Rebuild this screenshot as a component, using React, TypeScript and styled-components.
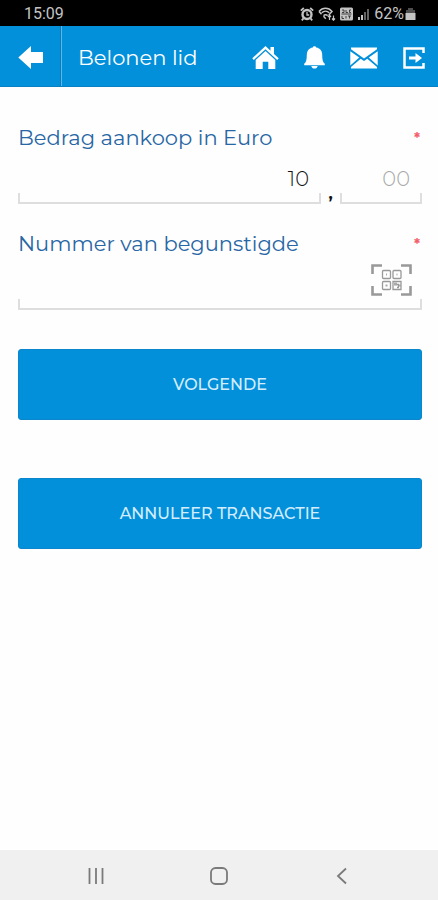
import React, { useState } from "react";
import styled, { createGlobalStyle } from "styled-components";

const GlobalStyle = createGlobalStyle`
  *, *::before, *::after { box-sizing: border-box; }
  body { margin: 0; background: #fefefe; font-family: Montserrat, Inter, sans-serif; }
  button, input { font: inherit; }
  svg { display: block; flex: none; }
`;

const Screen = styled.div`
  display: flex;
  flex-direction: column;
  min-height: 100vh;
`;

const StatusBar = styled.div`
  display: flex;
  align-items: center;
  justify-content: space-between;
  height: 26px;
  padding: 2px 22px 0 24px;
  background: #000;
  color: #c4c4c4;
  font: 400 16px/20px Roboto, sans-serif;
`;

const StatusIcons = styled.div`
  display: flex;
  align-items: center;
  gap: 4px;
`;

const Charge = styled.span`
  display: flex;
  align-items: center;
  gap: 1px;
`;

const Header = styled.header`
  display: flex;
  align-items: stretch;
  height: 61px;
  background: #0390db;
  border-bottom: 1px solid #0a80c2;
  color: #fff;
`;

const IconButton = styled.button`
  display: flex;
  align-items: center;
  justify-content: center;
  padding: 0;
  border: 0;
  background: none;
  color: inherit;
  cursor: pointer;
`;

const BackButton = styled(IconButton)`
  width: 62px;
  padding-top: 3px;
  border-right: 1px solid #5cb8ec;
  box-shadow: inset -1px 0 0 #0a7dbd;
`;

const Title = styled.h1`
  flex: 1;
  align-self: center;
  margin: 0;
  padding: 4px 0 0 16px;
  font-size: 21px;
  line-height: 28px;
  font-weight: 400;
  white-space: nowrap;
`;

const Actions = styled.nav`
  display: flex;
  align-items: center;
  gap: 25px;
  padding: 3px 13px 0 0;
`;

const Form = styled.form`
  display: flex;
  flex-direction: column;
  flex: 1;
  padding: 37px 16px 24px 18px;
`;

const Field = styled.div`
  display: flex;
  flex-direction: column;
  height: 106px;
`;

const Label = styled.label`
  display: flex;
  align-items: center;
  justify-content: space-between;
  color: #2866a5;
  font-size: 21px;
  line-height: 28px;
  font-weight: 400;
`;

const Required = styled.span`
  color: #f4606a;
  font-size: 14px;
  font-weight: 700;
  line-height: 20px;
  padding-right: 2px;
`;

const InputRow = styled.div`
  display: flex;
  align-items: flex-end;
`;

const InputBox = styled.div<{ $width?: number }>`
  display: flex;
  align-items: flex-start;
  flex: ${(p) => (p.$width ? `0 0 ${p.$width}px` : "1")};
  min-width: 0;
  height: 52px;
  padding: 6px 10px 0 2px;
  background:
    linear-gradient(#dedede, #dedede) left bottom / 2px 11px no-repeat,
    linear-gradient(#dedede, #dedede) right bottom / 2px 11px no-repeat,
    linear-gradient(#dedede, #dedede) left bottom / 100% 2px no-repeat;
`;

const TextInput = styled.input`
  flex: 1;
  width: 100%;
  height: 40px;
  min-width: 0;
  padding: 0 2px 0 0;
  border: 0;
  outline: 0;
  background: none;
  color: #111;
  font-size: 21px;
  line-height: 28px;
  font-weight: 300;
  text-align: right;
  &::placeholder { color: #a8a8a8; opacity: 1; }
`;

const Separator = styled.span`
  width: 19px;
  font-size: 16px;
  line-height: 20px;
  font-weight: 700;
  text-align: center;
  color: #111;
`;

const Buttons = styled.div`
  display: flex;
  flex-direction: column;
  gap: 58px;
  padding-top: 13px;
`;

const ActionButton = styled.button`
  height: 71px;
  border: 1px solid #0b86cc;
  border-radius: 3px;
  background: #0390db;
  color: #d4edfc;
  font-size: 16px;
  line-height: 20px;
  font-weight: 500;
  cursor: pointer;
`;

const SystemNav = styled.nav`
  display: flex;
  align-items: center;
  justify-content: center;
  gap: 105px;
  height: 50px;
  padding-top: 2px;
  background: #f0f0f0;
  color: #7a7a7a;
`;

const AlarmIcon = () => (
  <svg width="14" height="14" viewBox="0 0 14 14" fill="none" stroke="currentColor">
    <circle cx="7" cy="7.5" r="4.5" strokeWidth="2.4" />
    <path d="M7 5v3h2.2" strokeWidth="1.3" />
    <path d="M.8 3.6 3.8 1M13.2 3.6 10.2 1M3.5 11.3l-1.7 2M10.5 11.3l1.7 2" strokeWidth="1.8" />
  </svg>
);

const WifiIcon = () => (
  <svg width="18" height="14" viewBox="0 0 18 14" fill="none" stroke="currentColor" strokeWidth="1.5">
    <path d="M1 4.5C4.500 .3 10.500 .3 14 4.500L10.800 8M1 4.500l2.500 2.700M3.700 5.700c2.200-2 5.400-2 7.600 0M5.500 8.600c1.300-1.100 2.900-1.100 4.200 0" />
    <path d="m5.500 9.200 2.300 2.600" />
    <path d="M11.500 13V8.500M10 10l1.500-1.800L13 10M15.500 8.500V13M14 11.500l1.500 1.700 1.500-1.700" strokeWidth="1.200" />
  </svg>
);

const LteIcon = () => (
  <svg width="13" height="14" viewBox="0 0 13 14">
    <rect y=".5" width="13" height="13" rx="1.500" fill="currentColor" />
    <path d="M2 3h2v2.500H2M6 3v2.500h2M11 3H9.500v2.500H11M1.500 7h10M2 9v2.500h2M6 9v2.500M8 9h3M9.500 9v2.500" fill="none" stroke="#222" strokeWidth=".8" />
  </svg>
);

const SignalIcon = () => (
  <svg width="13" height="14" viewBox="0 0 13 14" fill="currentColor">
    <path d="M1 10h2v3H1zM4 8h2v5H4z" />
    <path d="M7 5h2v8H7zM10 2h2v11h-2z" opacity=".5" />
  </svg>
);

const BatteryIcon = () => (
  <svg width="11" height="14" viewBox="0 0 11 14" fill="currentColor">
    <path d="M3 1h5v2h2v3H1V3h2z" opacity=".4" />
    <path d="M.5 6h10v7H.5z" />
  </svg>
);

const BackIcon = () => (
  <svg width="25" height="23" viewBox="0 0 25 23" fill="currentColor">
    <path d="M.3 11.500 13 0v6h12v11H13v6z" />
  </svg>
);

const HomeIcon = () => (
  <svg width="27" height="23" viewBox="0 0 27 23" fill="currentColor">
    <path d="M13.500 0 .3 12.300l1.500 1.600L13.500 3.300l11.700 10.600 1.500-1.600L22 8V1h-3.500v3.700z" />
    <path d="M13.500 5 3.700 14v9h7v-7.200h5.600V23h7v-9z" />
  </svg>
);

const BellIcon = () => (
  <svg width="21" height="23" viewBox="0 0 21 23" fill="currentColor">
    <path d="M8.800 1.600C9 .7 9.600.3 10.500.3s1.500.4 1.700 1.300c4 .7 6 3.500 6 7.300 0 4.600.6 7.300 2.600 8.900v1.400H.2v-1.400c2-1.600 2.600-4.300 2.600-8.900 0-3.800 2-6.600 6-7.300zM7.300 20h6.400c-.4 1.700-1.500 2.600-3.200 2.600S7.700 21.700 7.300 20z" />
  </svg>
);

const MailIcon = () => (
  <svg width="28" height="22" viewBox="0 0 28 22" fill="currentColor">
    <path d="M1 .5h26v1.800L14 11.500 1 2.300zM.3 4.200 9.200 10.600.3 18.500zM27.700 4.200v14.300l-8.900-7.900zM10.700 11.700l3.300 2.300 3.300-2.300L27 20v1.500H1V20z" />
  </svg>
);

const ExitIcon = () => (
  <svg width="22" height="22" viewBox="0 0 22 22">
    <path d="M20.500 6V1.500h-19v19h19V16" fill="none" stroke="currentColor" strokeWidth="2.500" />
    <path d="M6 9.500h6.500V6l6.500 5-6.500 5v-3.500H6z" fill="currentColor" />
  </svg>
);

const ScanIcon = () => (
  <svg width="41" height="32" viewBox="0 0 41 32" fill="none" stroke="#999">
    <path d="M1.500 10V1.500H11M30 1.500h9.500V10M39.500 22v8.500H30M11 30.500H1.500V22" strokeWidth="2.600" />
    <g strokeWidth="1.300">
      <rect x="11.500" y="6.500" width="8" height="8" rx="1" />
      <rect x="22" y="6.500" width="8" height="8" rx="1" />
      <rect x="11.500" y="17.500" width="8" height="8" rx="1" />
      <path d="M22 17.500h8v8h-8z" />
      <path d="M24.500 20.500h3v2.500M29 20.500v2M26 23.500h2" />
    </g>
    <path d="M15 9.500h1v2h-1zM25.500 9.500h1v2h-1zM14.500 20.500h2v2h-2zM23 18.500h3v3h-3z" fill="#aaa" stroke="none" />
  </svg>
);

const RecentsIcon = () => (
  <svg width="18" height="18" viewBox="0 0 18 18" stroke="currentColor" strokeWidth="1.800">
    <path d="M2.500 1v16M9 1v16M15.500 1v16" />
  </svg>
);

const HomeKeyIcon = () => (
  <svg width="18" height="18" viewBox="0 0 18 18" fill="none" stroke="currentColor" strokeWidth="1.800">
    <rect x="1" y="1" width="16" height="16" rx="4.500" />
  </svg>
);

const BackKeyIcon = () => (
  <svg width="18" height="18" viewBox="0 0 18 18" fill="none" stroke="currentColor" strokeWidth="1.800">
    <path d="M13 1.500 5 9l8 7.500" />
  </svg>
);

export default function App() {
  const [euros, setEuros] = useState("10");
  const [cents, setCents] = useState("");
  const [recipient, setRecipient] = useState("");

  return (
    <Screen>
      <GlobalStyle />
      <StatusBar>
        <span>15:09</span>
        <StatusIcons>
          <AlarmIcon />
          <WifiIcon />
          <LteIcon />
          <SignalIcon />
          <Charge>
            62%
            <BatteryIcon />
          </Charge>
        </StatusIcons>
      </StatusBar>
      <Header>
        <BackButton type="button" aria-label="Terug"><BackIcon /></BackButton>
        <Title>Belonen lid</Title>
        <Actions>
          <IconButton type="button" aria-label="Home"><HomeIcon /></IconButton>
          <IconButton type="button" aria-label="Meldingen"><BellIcon /></IconButton>
          <IconButton type="button" aria-label="Berichten"><MailIcon /></IconButton>
          <IconButton type="button" aria-label="Uitloggen"><ExitIcon /></IconButton>
        </Actions>
      </Header>
      <Form onSubmit={(e) => e.preventDefault()}>
        <Field>
          <Label htmlFor="euros">
            Bedrag aankoop in Euro
            <Required>*</Required>
          </Label>
          <InputRow>
            <InputBox>
              <TextInput id="euros" inputMode="numeric" value={euros} onChange={(e) => setEuros(e.target.value)} />
            </InputBox>
            <Separator>,</Separator>
            <InputBox $width={82}>
              <TextInput aria-label="Eurocent" inputMode="numeric" placeholder="00" value={cents} onChange={(e) => setCents(e.target.value)} />
            </InputBox>
          </InputRow>
        </Field>
        <Field>
          <Label htmlFor="recipient">
            Nummer van begunstigde
            <Required>*</Required>
          </Label>
          <InputRow>
            <InputBox>
              <TextInput id="recipient" value={recipient} onChange={(e) => setRecipient(e.target.value)} />
              <IconButton type="button" aria-label="QR-code scannen"><ScanIcon /></IconButton>
            </InputBox>
          </InputRow>
        </Field>
        <Buttons>
          <ActionButton type="submit">VOLGENDE</ActionButton>
          <ActionButton type="button">ANNULEER TRANSACTIE</ActionButton>
        </Buttons>
      </Form>
      <SystemNav>
        <IconButton type="button" aria-label="Recente apps"><RecentsIcon /></IconButton>
        <IconButton type="button" aria-label="Startscherm"><HomeKeyIcon /></IconButton>
        <IconButton type="button" aria-label="Vorige"><BackKeyIcon /></IconButton>
      </SystemNav>
    </Screen>
  );
}
